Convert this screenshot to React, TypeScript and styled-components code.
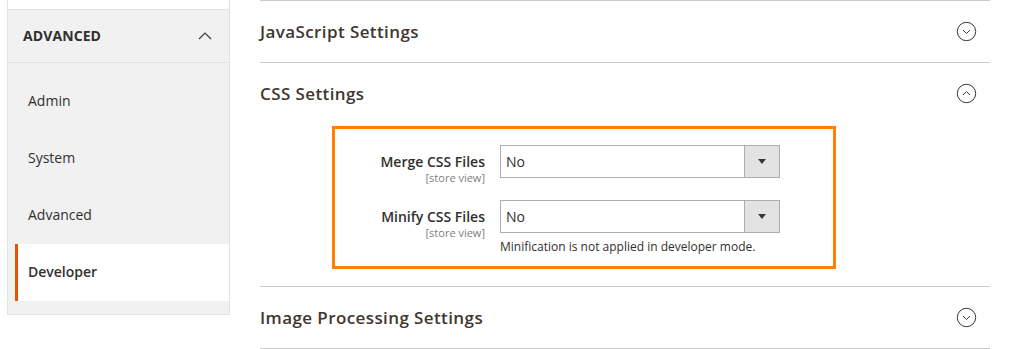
import React from 'react';
import styled, { createGlobalStyle } from 'styled-components';

const GlobalStyle = createGlobalStyle`
  html, body {
    margin: 0;
    padding: 0;
    background: #ffffff;
    font-family: "Open Sans", "Liberation Sans", sans-serif;
    color: #303030;
  }
`

const Page = styled.div`
  display: flex;
  align-items: flex-start;
  gap: 30px;
  padding-left: 7px;
  width: 1015px;
  box-sizing: border-box;
`

const Sidebar = styled.aside`
  width: 223px;
  flex-shrink: 0;
  border-left: 1px solid #e3e3e3;
  border-right: 1px solid #e3e3e3;
  border-bottom: 1px solid #e3e3e3;
  box-sizing: border-box;
`

const PrevItem = styled.div`
  height: 9px;
  background: #ffffff;
`

const NavHeader = styled.div`
  display: flex;
  align-items: center;
  justify-content: space-between;
  height: 52px;
  padding: 0 17px 0 15px;
  background: #f1f1f1;
  border-top: 1px solid #e3e3e3;
  border-bottom: 1px solid #e3e3e3;
  font-size: 14px;
  font-weight: 700;
  color: #303030;
  letter-spacing: 0.1px;

  span {
    margin-top: -2px;
  }
`

const NavList = styled.ul`
  list-style: none;
  margin: 0;
  padding: 10px 0 13px;
  background: #f1f1f1;
`

const NavItem = styled.li<{ $active?: boolean }>`
  display: flex;
  align-items: center;
  height: 57px;
  margin-left: 7px;
  padding-left: ${p => (p.$active ? '10px' : '13px')};
  padding-bottom: 2px;
  box-sizing: border-box;
  border-left: ${p => (p.$active ? '3px solid #eb5202' : 'none')};
  background: ${p => (p.$active ? '#ffffff' : 'transparent')};
  font-size: 14px;
  font-weight: ${p => (p.$active ? 600 : 400)};
  color: #303030;
`

const Main = styled.main`
  width: 730px;
  flex-shrink: 0;
`

const Section = styled.section`
  border-top: 1px solid #cccccc;

  &:last-child {
    border-bottom: 1px solid #cccccc;
  }
`

const SectionHead = styled.div`
  display: flex;
  align-items: center;
  justify-content: space-between;
  height: 61px;
  padding-right: 13px;
  font-size: 17px;
  font-weight: 600;
  color: #41362f;
  letter-spacing: 0.4px;
`

const SectionBody = styled.div`
  padding: 2px 0 17px 72px;
`

const Highlight = styled.div`
  width: 504px;
  box-sizing: border-box;
  border: 3px solid #ff8000;
  padding: 16px 0 11px;
  display: flex;
  flex-direction: column;
  gap: 16px;
`

const Field = styled.div`
  display: grid;
  grid-template-columns: 150px 280px;
  column-gap: 15px;
  align-items: start;
`

const LabelCol = styled.div`
  display: flex;
  flex-direction: column;
  align-items: flex-end;
  padding-top: 7px;
`

const Label = styled.label`
  font-size: 14px;
  font-weight: 600;
  color: #303030;
  line-height: 20px;
`

const Scope = styled.span`
  font-size: 11px;
  color: #808080;
  line-height: 12px;
`

const Control = styled.div`
  display: flex;
  flex-direction: column;
`

const Select = styled.div`
  display: flex;
  height: 33px;
  box-sizing: border-box;
  border: 1px solid #adadad;
  background: #ffffff;
`

const SelectValue = styled.div`
  flex: 1;
  display: flex;
  align-items: center;
  padding-left: 5px;
  font-size: 14px;
  color: #303030;
`

const SelectButton = styled.div`
  width: 34px;
  display: flex;
  align-items: center;
  justify-content: center;
  background: #e3e3e3;
  border-left: 1px solid #adadad;
`

const Arrow = styled.span`
  width: 0;
  height: 0;
  border-left: 4px solid transparent;
  border-right: 4px solid transparent;
  border-top: 5px solid #41362f;
`

const Note = styled.div`
  margin-top: 6px;
  font-size: 12px;
  color: #303030;
  line-height: 16px;
`

const CircleChevron = ({ up }: { up?: boolean }) => (
  <svg width="21" height="21" viewBox="0 0 21 21">
    <circle cx="10.5" cy="10.5" r="9.2" fill="none" stroke="#41362f" strokeWidth="1" />
    <path
      d={up ? 'M7 12 L10.5 8.5 L14 12' : 'M7 9 L10.5 12.5 L14 9'}
      fill="none"
      stroke="#41362f"
      strokeWidth="1"
    />
  </svg>
)

const ChevronUp = () => (
  <svg width="14" height="8" viewBox="0 0 14 8">
    <path d="M1 7 L7 1 L13 7" fill="none" stroke="#41362f" strokeWidth="1.2" />
  </svg>
)

const navItems = ['Admin', 'System', 'Advanced', 'Developer']

const App = () => {
  return (
    <>
      <GlobalStyle />
      <Page>
        <Sidebar>
          <PrevItem />
          <NavHeader>
            <span>ADVANCED</span>
            <ChevronUp />
          </NavHeader>
          <NavList>
            {navItems.map(item => (
              <NavItem key={item} $active={item === 'Developer'}>{item}</NavItem>
            ))}
          </NavList>
        </Sidebar>
        <Main>
          <Section>
            <SectionHead>
              <span>JavaScript Settings</span>
              <CircleChevron />
            </SectionHead>
          </Section>
          <Section>
            <SectionHead>
              <span>CSS Settings</span>
              <CircleChevron up />
            </SectionHead>
            <SectionBody>
              <Highlight>
                <Field>
                  <LabelCol>
                    <Label>Merge CSS Files</Label>
                    <Scope>[store view]</Scope>
                  </LabelCol>
                  <Control>
                    <Select>
                      <SelectValue>No</SelectValue>
                      <SelectButton><Arrow /></SelectButton>
                    </Select>
                  </Control>
                </Field>
                <Field>
                  <LabelCol>
                    <Label>Minify CSS Files</Label>
                    <Scope>[store view]</Scope>
                  </LabelCol>
                  <Control>
                    <Select>
                      <SelectValue>No</SelectValue>
                      <SelectButton><Arrow /></SelectButton>
                    </Select>
                    <Note>Minification is not applied in developer mode.</Note>
                  </Control>
                </Field>
              </Highlight>
            </SectionBody>
          </Section>
          <Section>
            <SectionHead>
              <span>Image Processing Settings</span>
              <CircleChevron />
            </SectionHead>
          </Section>
        </Main>
      </Page>
    </>
  );
};

export default App;
